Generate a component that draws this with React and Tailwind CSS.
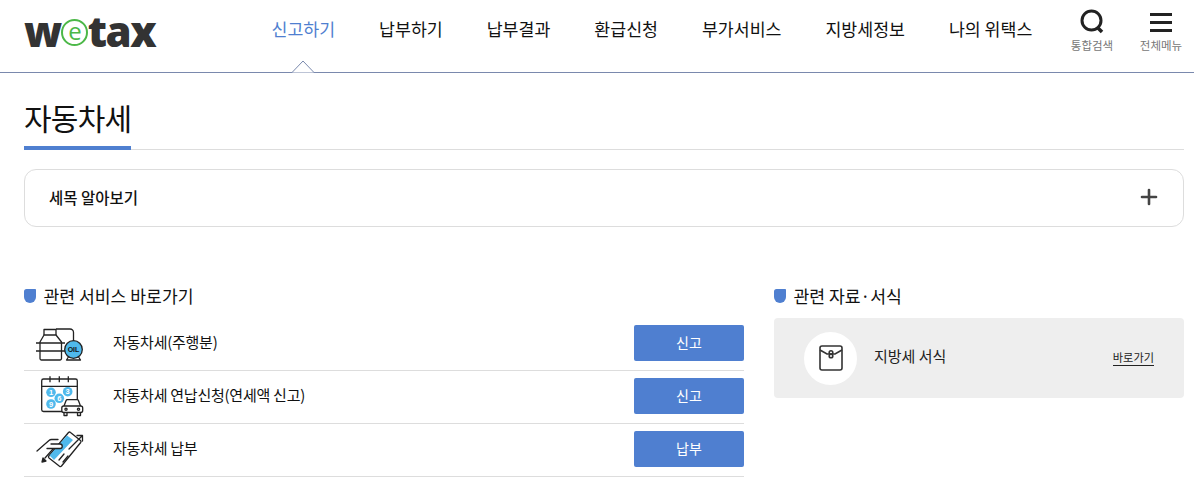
import React from 'react';
import { Plus } from 'lucide-react';

const menus = ['신고하기', '납부하기', '납부결과', '환급신청', '부가서비스', '지방세정보', '나의 위택스'];

const OilIcon = () => (
  <svg width="50" height="40" viewBox="0 0 50 40" fill="none" stroke="#222" strokeWidth="1.3" strokeLinejoin="round">
    <path d="M21 6h14a3.500 3.500 0 0 1 3.500 3.500V18" />
    <path d="M9 12V6.500h12V12" />
    <path d="M9 12h12l5.500 7v16.500a1.500 1.500 0 0 1-1.500 1.500H6.500A1.500 1.500 0 0 1 5 35.500V19z" fill="#fff" />
    <path d="M1 20h29M1 28h29" />
    <path d="M34 33l-2.500 4h14l-2.500-4" fill="#fff" />
    <circle cx="38.500" cy="26.500" r="8.800" fill="#4fb9ec" />
    <text x="38.500" y="29" textAnchor="middle" fontSize="7" fontWeight="700" fill="#111" stroke="none" fontFamily="Liberation Sans, sans-serif">OIL</text>
  </svg>
);

const CalendarIcon = () => (
  <svg width="50" height="42" viewBox="0 0 50 42" fill="none" stroke="#222" strokeWidth="1.300" strokeLinejoin="round">
    <path d="M27 36.500H8.500A1.800 1.800 0 0 1 6.700 34.700V5.800A1.800 1.800 0 0 1 8.500 4h32a1.800 1.800 0 0 1 1.800 1.800V25" />
    <path d="M6.700 11.300h35.600M15 1.300v6M24.300 1.300v6M33.300 1.300v6" />
    <g stroke="none" fill="#4fb9ec">
      <circle cx="16" cy="17.300" r="4.800" />
      <circle cx="32.700" cy="16.700" r="4.800" />
      <circle cx="24.300" cy="23.300" r="4.800" />
      <circle cx="16" cy="29" r="4.800" />
    </g>
    <g stroke="none" fill="#fff" fontSize="7.500" fontWeight="700" textAnchor="middle" fontFamily="Liberation Sans, sans-serif">
      <text x="16" y="20">1</text>
      <text x="32.700" y="19.400">3</text>
      <text x="24.300" y="26">6</text>
      <text x="16" y="31.700">9</text>
    </g>
    <path d="M29 31l2-5.300a1.500 1.500 0 0 1 1.400-1h9.700a1.500 1.500 0 0 1 1.400 1l2 5.300" fill="#fff" />
    <rect x="26.800" y="31" width="20.900" height="6.500" rx="2" fill="#fff" />
    <path d="M29 37.500v3h3v-3M42.500 37.500v3h3v-3" />
    <circle cx="31" cy="34.300" r="1.100" />
    <circle cx="43.500" cy="34.300" r="1.100" />
  </svg>
);

const CardIcon = () => (
  <svg width="50" height="40" viewBox="0 0 50 40" fill="none" stroke="#222" strokeWidth="1.300" strokeLinejoin="round" strokeLinecap="round">
    <path d="M33.500 3.500a1.500 1.500 0 0 1 2 0l10 8a1.500 1.500 0 0 1 .2 2L26.500 37a1.500 1.500 0 0 1-2 .2L14 29a1.500 1.500 0 0 1-.2-2z" fill="#fff" />
    <path d="M32 6.500l6 4.500L19 31l-4.500-4.500z" fill="#4fb9ec" stroke="none" />
    <path d="M2 22L14 11.500a4 4 0 0 1 2.500-1H23l-3 4.500h5a2.200 2.200 0 0 1 0 4.500H12L7 26z" fill="#fff" stroke="none" />
    <path d="M2 22L14 11.500a4 4 0 0 1 2.500-1H23" />
    <path d="M12 19.500h13a2.200 2.200 0 0 0 0-4.500H16" />
    <path d="M10 29l8-9" />
    <path d="M7 33l4-1-3-3z" fill="#222" />
    <path d="M34 20L47 7M42 6.500h5.500V12" />
    <path d="M24 31l5-6M28 33l5-6" />
  </svg>
);

const services = [
  { icon: <OilIcon />, name: '자동차세(주행분)', action: '신고' },
  { icon: <CalendarIcon />, name: '자동차세 연납신청(연세액 신고)', action: '신고' },
  { icon: <CardIcon />, name: '자동차세 납부', action: '납부' },
];

const SectionTitle = ({ children }) => (
  <h2 className="flex items-center gap-[7.500px] h-[24px] pb-[1px] text-[17.200px] leading-[24px] font-normal text-[#111]">
    <span className="w-[12px] h-[14px] bg-[#4f7fd0] rounded-tl-[3px] rounded-tr-[1px] rounded-b-[7px]" />
    {children}
  </h2>
);

const App = () => {
  return (
    <div className="bg-white text-[#222] h-[502px] overflow-hidden font-['Noto_Sans_CJK_KR','Noto_Sans',sans-serif]">
      {/* Header */}
      <header className="relative h-[73px] border-b border-[#7a89ad] pl-[24px] flex">
        <div className="w-[247.500px] h-[60px] flex items-center text-[#333] font-['Open_Sans',sans-serif] font-extrabold text-[42px] tracking-[-1.500px]">
          <span>w</span>
          <span className="w-[27px] h-[27px] mt-[5px] rounded-full border-[2px] border-[#4cb848] flex items-center justify-center text-[#4cb848] text-[24px] leading-none font-normal pb-[3px]">
            e
          </span>
          <span>tax</span>
        </div>
        <nav className="flex gap-[44px] h-[58px] items-center text-[17.300px]">
          {menus.map((menu, i) => (
            <a key={menu} className={i === 0 ? 'text-[#4f7fd0]' : 'text-[#111]'}>
              {menu}
            </a>
          ))}
        </nav>
        <div className="absolute right-[3px] top-0 flex">
          <button className="w-[68px] mr-[5px] flex flex-col items-center pt-[9px] text-[11.500px] leading-[14px] text-[#777]">
            <svg width="26" height="26" viewBox="0 0 26 26" fill="none" stroke="#222" strokeWidth="3">
              <circle cx="12.500" cy="11.500" r="9.500" />
              <path d="M18 18l5 5" strokeWidth="3.500" />
            </svg>
            <span className="mt-[3px]">통합검색</span>
          </button>
          <button className="w-[60px] flex flex-col items-center pt-[13px] text-[11.500px] leading-[14px] text-[#777]">
            <span className="w-[22px] h-[19px] border-y-[3px] border-[#222] flex items-center">
              <span className="w-full h-[3px] bg-[#222]" />
            </span>
            <span className="mt-[6px]">전체메뉴</span>
          </button>
        </div>
        {/* active menu caret */}
        <span className="absolute left-[291px] top-[60px] w-[24px] h-[14px]">
          <svg width="24" height="14" viewBox="0 0 24 14" fill="#fff" stroke="#7a89ad">
            <path d="M0 12.500h1L12 1l11 11.500h1" />
            <path d="M1.500 13.500h21" stroke="#fff" />
          </svg>
        </span>
      </header>

      <main className="px-[10px] pl-[24px]">
        {/* Title */}
        <div className="mt-[24px] h-[53px] border-b border-[#ddd]">
          <h1 className="inline-block h-[53px] border-b-[4px] border-[#4f7fd0] text-[30px] leading-[40px] tracking-[-0.750px] text-[#111]">
            자동차세
          </h1>
        </div>

        {/* Accordion */}
        <div className="mt-[19px] h-[58px] border border-[#ddd] rounded-[12px] flex items-center justify-between pl-[25px] pr-[22px]">
          <span className="text-[15.500px] -mt-[1px] -ml-[1px] font-medium text-[#111]">세목 알아보기</span>
          <Plus size={24} strokeWidth={2.600} color="#444" className="-mt-[3px]" />
        </div>

        {/* Sections */}
        <div className="mt-[57px] flex">
          <section className="w-[720px] mr-[30px]">
            <SectionTitle>관련 서비스 바로가기</SectionTitle>
            <ul className="mt-[10px]">
              {services.map((s) => (
                <li key={s.name} className="h-[53px] border-b border-[#ddd] pb-[2px] flex items-center">
                  <div className="w-[89px] pl-[11px] flex items-center justify-start">{s.icon}</div>
                  <span className="flex-1 text-[15px] -mt-[1px] text-[#111] tracking-[-0.250px]">{s.name}</span>
                  <a className="w-[110px] h-[36px] bg-[#4f7fd0] text-white text-[14px] rounded-[2px] pb-[1px] flex items-center justify-center">
                    {s.action}
                  </a>
                </li>
              ))}
            </ul>
          </section>

          <section className="w-[410px]">
            <SectionTitle>관련 자료·서식</SectionTitle>
            <div className="mt-[10px] h-[80px] bg-[#eee] rounded-[4px] flex items-center pl-[30px] pr-[30px]">
              <span className="w-[53px] h-[53px] rounded-full bg-white flex items-center justify-center">
                <svg width="24" height="26" viewBox="0 0 24 26" fill="none" stroke="#333" strokeWidth="1.600">
                  <rect x="1" y="1" width="22" height="24" rx="2" />
                  <path d="M1 5l7 4h8l7-4" />
                  <circle cx="12" cy="7.500" r="1.800" />
                  <circle cx="12" cy="11" r="1.800" />
                </svg>
              </span>
              <span className="ml-[17px] -mt-[3px] text-[15px] text-[#222]">지방세 서식</span>
              <a className="ml-auto text-[11.200px] leading-[15px] text-[#222] border-b border-[#222]">바로가기</a>
            </div>
          </section>
        </div>
      </main>
    </div>
  );
};

export default App;
